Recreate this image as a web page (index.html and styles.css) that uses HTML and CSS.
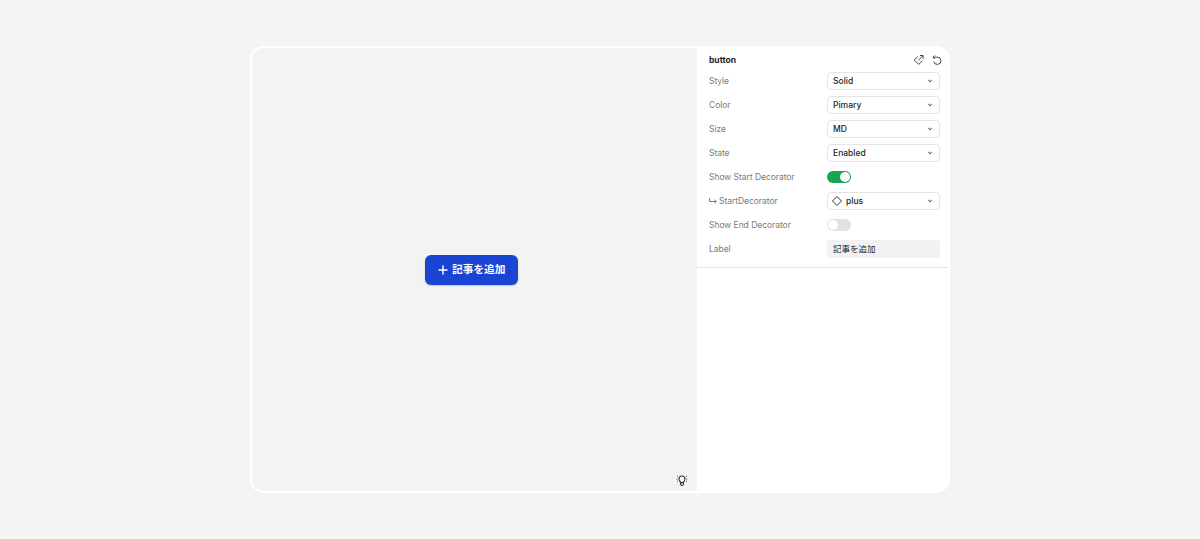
FILE: index.html
```html
<!DOCTYPE html>
<html lang="ja">
<head>
    <meta charset="UTF-8">
    <meta name="viewport" content="width=device-width, initial-scale=1.0">
    <title>button</title>
    <link rel="stylesheet" href="styles.css">
</head>
<body>
    <main class="playground">
        <section class="preview">
            <button class="btn" type="button">
                <svg width="10" height="10" viewBox="0 0 10 10"><path d="M5 .5v9M.5 5h9" stroke="#fff" stroke-width="1.5"/></svg>
                <span>記事を追加</span>
            </button>
            <svg class="bulb" width="12" height="12" viewBox="0 0 12 12" fill="none" stroke="#333" stroke-width="1.1">
                <path d="M4.6 8C3.5 7.3 3 6.3 3 5a3 3 0 0 1 6 0c0 1.3-.5 2.3-1.6 3v2.2c0 .6-.4 1-1 1h-.8c-.6 0-1-.4-1-1zM4.6 8.6h2.8"/>
                <path d="M1 2l1 .5M.7 5h1M1.1 7.6l.9-.5M11 2l-1 .5M11.3 5h-1M10.9 7.6l-.9-.5" stroke-width=".8"/>
            </svg>
        </section>

        <aside class="panel">
            <div class="properties">
                <header class="panel-header">
                    <h1>button</h1>
                    <div class="actions">
                        <svg width="12" height="12" viewBox="0 0 12 12" fill="none" stroke="#444" stroke-width="1">
                            <path d="M4.9 2.4L1.3 6l4.4 4.4 3.6-3.6M5.4 6.2l4.6-4.6M6.9 1.5h3.2v3.2"/>
                        </svg>
                        <svg width="12" height="12" viewBox="0 0 12 12" fill="none" stroke="#444" stroke-width="1">
                            <path d="M3.8 1.4L2 3.2 3.8 5M2.1 3.2h4.2a3.6 3.6 0 1 1-3.5 4.2"/>
                        </svg>
                    </div>
                </header>

                <div class="row">
                    <span class="name">Style</span>
                    <div class="select"><span>Solid</span><svg class="chevron" viewBox="0 0 6 4"><path d="M1.2 1L3 2.7 4.8 1"/></svg></div>
                </div>
                <div class="row">
                    <span class="name">Color</span>
                    <div class="select"><span>Pimary</span><svg class="chevron" viewBox="0 0 6 4"><path d="M1.2 1L3 2.7 4.8 1"/></svg></div>
                </div>
                <div class="row">
                    <span class="name">Size</span>
                    <div class="select"><span>MD</span><svg class="chevron" viewBox="0 0 6 4"><path d="M1.2 1L3 2.7 4.8 1"/></svg></div>
                </div>
                <div class="row">
                    <span class="name">State</span>
                    <div class="select"><span>Enabled</span><svg class="chevron" viewBox="0 0 6 4"><path d="M1.2 1L3 2.7 4.8 1"/></svg></div>
                </div>
                <div class="row">
                    <span class="name">Show Start Decorator</span>
                    <div class="toggle on"></div>
                </div>
                <div class="row">
                    <span class="name">
                        <svg width="8" height="8" viewBox="0 0 8 8" fill="none" stroke="#777" stroke-width="1"><path d="M.6 1v3.5h6.6M5.4 2.6l1.9 1.9-1.9 1.9"/></svg>
                        StartDecorator
                    </span>
                    <div class="select instance">
                        <svg width="10" height="10" viewBox="0 0 10 10" fill="none" stroke="#333" stroke-width="1"><path d="M5 .5L9.5 5 5 9.5.5 5z"/></svg>
                        <span>plus</span>
                        <svg class="chevron" viewBox="0 0 6 4"><path d="M1.2 1L3 2.7 4.8 1"/></svg>
                    </div>
                </div>
                <div class="row">
                    <span class="name">Show End Decorator</span>
                    <div class="toggle"></div>
                </div>
                <div class="row">
                    <span class="name">Label</span>
                    <div class="text-field">記事を追加</div>
                </div>
            </div>
        </aside>
    </main>
</body>
</html>
```

FILE: styles.css
```css
* {
    box-sizing: border-box;
}

body {
    margin: 0;
    height: 539px;
    padding-top: 46px;
    background-color: #f2f5f4;
    font-family: Inter, "Noto Sans CJK JP", sans-serif;
    font-size: 8.5px;
}

svg {
    display: block;
    flex: none;
}

.playground {
    display: flex;
    width: 700px;
    height: 447px;
    margin: 0 auto;
    border: 2px solid #fff;
    border-radius: 14px;
    background-color: #fff;
    overflow: hidden;
}

.preview {
    position: relative;
    display: flex;
    align-items: center;
    justify-content: center;
    width: 445px;
    padding: 0 6px 0 0;
    background-color: #f3f3f3;
}

.btn {
    display: flex;
    align-items: center;
    gap: 4px;
    height: 30px;
    width: 93px;
    padding: 0 0 0 13px;
    border: none;
    border-radius: 6px;
    background-color: #1a44d3;
    box-shadow: 0 1px 2px rgba(0, 0, 0, 0.2);
    color: #fff;
    font-family: "Noto Sans CJK JP", sans-serif;
    font-size: 10.7px;
    font-weight: 700;
    white-space: nowrap;
}

.btn span {
    padding-bottom: 2px;
}

.bulb {
    position: absolute;
    right: 9px;
    bottom: 5px;
}

.panel {
    flex: 1;
}

.properties {
    height: 220px;
    padding: 0 8px 0 12px;
    border-bottom: 1px solid #e2e2e2;
}

.panel-header {
    display: flex;
    align-items: center;
    justify-content: space-between;
    height: 24px;
    margin-right: -3px;
}

.panel-header h1 {
    margin: 0;
    color: #1e1e1e;
    font-size: 8.5px;
    font-weight: 700;
}

.actions {
    display: flex;
    gap: 6px;
}

.row {
    display: flex;
    align-items: center;
    height: 24px;
}

.panel-header + .row {
    margin-top: -3px;
}

.name {
    display: flex;
    align-items: center;
    gap: 2px;
    width: 118px;
    color: #7a7a7a;
    letter-spacing: -0.04px;
}

.select {
    display: flex;
    align-items: center;
    width: 113px;
    height: 18px;
    padding: 0 6px 0 5px;
    border: 1px solid #e3e3e3;
    border-radius: 4px;
    color: #1e1e1e;
    font-weight: 500;
}

.select.instance {
    gap: 4px;
    padding-left: 4px;
}

.chevron {
    width: 6px;
    height: 4px;
    margin-left: auto;
    fill: none;
    stroke: #333;
    stroke-width: 1;
}

.toggle {
    width: 24px;
    height: 12px;
    padding: 1px;
    border-radius: 6px;
    background-color: #e2e2e2;
}

.toggle::before {
    content: "";
    display: block;
    width: 10px;
    height: 10px;
    border-radius: 50%;
    background-color: #fff;
}

.toggle.on {
    background-color: #17a650;
}

.toggle.on::before {
    margin-left: auto;
}

.text-field {
    width: 113px;
    height: 18px;
    padding-left: 6px;
    border-radius: 4px;
    background-color: #f2f2f2;
    color: #1e1e1e;
    line-height: 18px;
}
```
